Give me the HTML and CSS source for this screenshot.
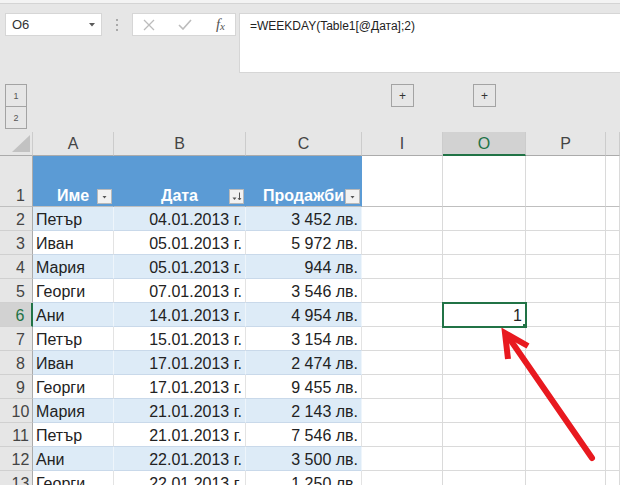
FILE: index.html
```html
<!DOCTYPE html>
<html lang="bg">
<head>
    <meta charset="UTF-8">
    <title>WEEKDAY</title>
    <link rel="stylesheet" href="styles.css">
</head>
<body>
    <div class="excel">
        <div class="ribbon-edge"></div>

        <!-- formula bar -->
        <div class="formula-bar">
            <div class="name-box">
                <span>O6</span>
                <svg width="6" height="4" viewBox="0 0 6 4"><path d="M0 0h6L3 3.5z" fill="#5a5a5a"/></svg>
            </div>
            <div class="grip"><i></i><i></i><i></i></div>
            <div class="fx-tools">
                <svg width="12" height="12" viewBox="0 0 12 12"><path d="M1 1l10 10M11 1L1 11" stroke="#bcbcbc" stroke-width="1.3" fill="none"/></svg>
                <svg width="14" height="11" viewBox="0 0 14 11"><path d="M1 6l4 4 8-9" stroke="#bcbcbc" stroke-width="1.6" fill="none"/></svg>
                <span class="fx">f<sub>x</sub></span>
            </div>
            <div class="formula">=WEEKDAY(Table1[@Дата];2)</div>
        </div>

        <!-- outline levels / group buttons -->
        <div class="outline">
            <div class="levels">
                <button class="lvl">1</button>
                <button class="lvl">2</button>
            </div>
            <button class="expand col-i">+</button>
            <button class="expand col-o">+</button>
        </div>

        <!-- sheet -->
        <div class="sheet">
            <div class="row heads">
                <div class="cell corner"></div>
                <div class="cell head">A</div>
                <div class="cell head">B</div>
                <div class="cell head">C</div>
                <div class="cell head">I</div>
                <div class="cell head current">O</div>
                <div class="cell head">P</div>
                <div class="cell head"></div>
            </div>

            <div class="row tall">
                <div class="cell rh">1</div>
                <div class="cell th">Име
                    <span class="filter"><svg width="13" height="13" viewBox="0 0 13 13"><path d="M4.5 6h4L6.5 8.5z" fill="#555"/></svg></span>
                </div>
                <div class="cell th">Дата
                    <span class="filter"><svg width="13" height="13" viewBox="0 0 13 13"><path d="M2.5 7.5h4l-2 2.5z" fill="#555"/><path d="M9.5 2.5v7M8 8l1.5 2 1.5-2" stroke="#555" stroke-width="1" fill="none"/></svg></span>
                </div>
                <div class="cell th">Продажби
                    <span class="filter"><svg width="13" height="13" viewBox="0 0 13 13"><path d="M4.5 6h4L6.5 8.5z" fill="#555"/></svg></span>
                </div>
                <div class="cell"></div>
                <div class="cell"></div>
                <div class="cell"></div>
                <div class="cell"></div>
            </div>

            <div class="row band">
                <div class="cell rh">2</div>
                <div class="cell td">Петър</div>
                <div class="cell td num">04.01.2013 г.</div>
                <div class="cell td num">3 452 лв.</div>
                <div class="cell"></div><div class="cell"></div><div class="cell"></div><div class="cell"></div>
            </div>
            <div class="row">
                <div class="cell rh">3</div>
                <div class="cell td">Иван</div>
                <div class="cell td num">05.01.2013 г.</div>
                <div class="cell td num">5 972 лв.</div>
                <div class="cell"></div><div class="cell"></div><div class="cell"></div><div class="cell"></div>
            </div>
            <div class="row band">
                <div class="cell rh">4</div>
                <div class="cell td">Мария</div>
                <div class="cell td num">05.01.2013 г.</div>
                <div class="cell td num">944 лв.</div>
                <div class="cell"></div><div class="cell"></div><div class="cell"></div><div class="cell"></div>
            </div>
            <div class="row">
                <div class="cell rh">5</div>
                <div class="cell td">Георги</div>
                <div class="cell td num">07.01.2013 г.</div>
                <div class="cell td num">3 546 лв.</div>
                <div class="cell"></div><div class="cell"></div><div class="cell"></div><div class="cell"></div>
            </div>
            <div class="row band">
                <div class="cell rh current">6</div>
                <div class="cell td">Ани</div>
                <div class="cell td num">14.01.2013 г.</div>
                <div class="cell td num">4 954 лв.</div>
                <div class="cell"></div>
                <div class="cell num active">1</div>
                <div class="cell"></div><div class="cell"></div>
            </div>
            <div class="row">
                <div class="cell rh">7</div>
                <div class="cell td">Петър</div>
                <div class="cell td num">15.01.2013 г.</div>
                <div class="cell td num">3 154 лв.</div>
                <div class="cell"></div><div class="cell"></div><div class="cell"></div><div class="cell"></div>
            </div>
            <div class="row band">
                <div class="cell rh">8</div>
                <div class="cell td">Иван</div>
                <div class="cell td num">17.01.2013 г.</div>
                <div class="cell td num">2 474 лв.</div>
                <div class="cell"></div><div class="cell"></div><div class="cell"></div><div class="cell"></div>
            </div>
            <div class="row">
                <div class="cell rh">9</div>
                <div class="cell td">Георги</div>
                <div class="cell td num">17.01.2013 г.</div>
                <div class="cell td num">9 455 лв.</div>
                <div class="cell"></div><div class="cell"></div><div class="cell"></div><div class="cell"></div>
            </div>
            <div class="row band">
                <div class="cell rh">10</div>
                <div class="cell td">Мария</div>
                <div class="cell td num">21.01.2013 г.</div>
                <div class="cell td num">2 143 лв.</div>
                <div class="cell"></div><div class="cell"></div><div class="cell"></div><div class="cell"></div>
            </div>
            <div class="row">
                <div class="cell rh">11</div>
                <div class="cell td">Петър</div>
                <div class="cell td num">21.01.2013 г.</div>
                <div class="cell td num">7 546 лв.</div>
                <div class="cell"></div><div class="cell"></div><div class="cell"></div><div class="cell"></div>
            </div>
            <div class="row band">
                <div class="cell rh">12</div>
                <div class="cell td">Ани</div>
                <div class="cell td num">22.01.2013 г.</div>
                <div class="cell td num">3 500 лв.</div>
                <div class="cell"></div><div class="cell"></div><div class="cell"></div><div class="cell"></div>
            </div>
            <div class="row">
                <div class="cell rh">13</div>
                <div class="cell td">Георги</div>
                <div class="cell td num">22.01.2013 г.</div>
                <div class="cell td num">1 250 лв.</div>
                <div class="cell"></div><div class="cell"></div><div class="cell"></div><div class="cell"></div>
            </div>
        </div>

        <!-- red annotation arrow -->
        <svg class="arrow" width="620" height="485" viewBox="0 0 620 485">
            <path d="M592 458L509 338" stroke="#e8191f" stroke-width="6" stroke-linecap="round" fill="none"/>
            <path d="M508 359L505 333L528 346" stroke="#e8191f" stroke-width="6" stroke-linejoin="miter" fill="none"/>
        </svg>
    </div>
</body>
</html>
```

FILE: styles.css
```css
:root {
    --cols: 33px 81px 132px 116px 81px 83px 80px 14px;
    --green: #217346;
}

body {
    margin: 0;
    background-color: #e6e6e6;
    font-family: 'Liberation Sans', Arial, sans-serif;
}

.excel {
    position: relative;
    width: 620px;
    height: 485px;
    overflow: hidden;
    background-color: #e6e6e6;
}

.ribbon-edge {
    height: 3px;
    background-color: #f3f3f3;
    border-bottom: 1px solid #d4d4d4;
}

/* formula bar */
.formula-bar {
    display: flex;
    align-items: flex-start;
    height: 60px;
    padding: 9px 0 0 5px;
}

.name-box {
    box-sizing: border-box;
    width: 97px;
    height: 23px;
    display: flex;
    align-items: center;
    justify-content: space-between;
    padding: 0 6px 0 6px;
    background-color: #fff;
    border: 1px solid #d6d6d6;
    font-size: 13px;
    color: #333;
}

.grip {
    width: 30px;
    height: 23px;
    display: flex;
    flex-direction: column;
    align-items: center;
    justify-content: center;
    gap: 3px;
}

.grip i {
    width: 2px;
    height: 2px;
    background-color: #a9a9a9;
}

.fx-tools {
    box-sizing: border-box;
    width: 104px;
    height: 23px;
    display: flex;
    align-items: center;
    justify-content: space-between;
    padding: 0 10px 0 10px;
    margin-right: 3px;
    background-color: #fff;
    border: 1px solid #d6d6d6;
}

.fx {
    font-family: 'Liberation Serif', serif;
    font-style: italic;
    font-size: 15px;
    color: #555;
    line-height: 1;
}

.fx sub {
    font-size: 11px;
    vertical-align: -1px;
}

.formula {
    box-sizing: border-box;
    flex: 1;
    height: 60px;
    padding: 3px 10px;
    background-color: #fff;
    border: 1px solid #d6d6d6;
    border-right: none;
    font-size: 12px;
    line-height: 18px;
    color: #222;
}

/* outline */
.outline {
    display: grid;
    grid-template-columns: var(--cols);
    grid-template-rows: 23px 22px;
    margin-top: 11px;
}

.levels {
    grid-column: 1;
    grid-row: 1 / 3;
    display: flex;
    flex-direction: column;
    margin-left: 5px;
    width: 22px;
}

.lvl,
.expand {
    box-sizing: border-box;
    padding: 0;
    background: transparent;
    border: 1px solid #a3a3a3;
    font-family: 'Liberation Sans', Arial, sans-serif;
    color: #555;
    cursor: pointer;
}

.lvl {
    height: 23px;
    font-size: 9px;
}

.lvl + .lvl {
    height: 22px;
    border-top: none;
}

.expand {
    grid-row: 1;
    justify-self: center;
    width: 23px;
    height: 23px;
    font-size: 12px;
    color: #333;
}

.expand.col-i { grid-column: 5; }
.expand.col-o { grid-column: 6; }

/* sheet grid */
.sheet {
    margin-top: 3px;
}

.row {
    display: grid;
    grid-template-columns: var(--cols);
    height: 24px;
}

.row.tall {
    height: 51px;
}

.cell {
    box-sizing: border-box;
    display: flex;
    align-items: flex-end;
    padding: 0 3px;
    background-color: #fff;
    border-right: 1px solid #dadada;
    border-bottom: 1px solid #dadada;
    font-size: 16px;
    line-height: 20px;
    color: #222;
    white-space: nowrap;
    overflow: hidden;
}

.num {
    justify-content: flex-end;
}

.heads .cell {
    align-items: center;
    justify-content: center;
    background-color: #e6e6e6;
    border-right-color: #cccccc;
    border-bottom-color: #ababab;
    line-height: 23px;
    color: #444;
}

.heads .current {
    background-color: #d2d2d2;
    border-bottom: 2px solid var(--green);
    color: var(--green);
}

.corner {
    align-items: flex-end !important;
    justify-content: flex-end !important;
    padding: 0 2px 3px 0;
}

.corner::before {
    content: '';
    width: 18px;
    height: 17px;
    background-color: #c2c2c2;
    clip-path: polygon(100% 0, 100% 100%, 0 100%);
}

.rh {
    justify-content: center;
    padding-left: 12px;
    background-color: #e6e6e6;
    border-right-color: #ababab;
    border-bottom-color: #d0d0d0;
    font-size: 16px;
    color: #444;
}

.rh.current {
    background-color: #d2d2d2;
    border-right: 2px solid var(--green);
    color: var(--green);
}

.tall .cell {
    border-bottom-color: #bfbfbf;
}

/* table */
.th {
    position: relative;
    justify-content: center;
    background-color: #5b9bd5;
    border-right-color: #5b9bd5;
    font-weight: bold;
    color: #fff;
}

.filter {
    position: absolute;
    right: 1px;
    bottom: 2px;
    box-sizing: border-box;
    width: 15px;
    height: 15px;
    display: flex;
    align-items: center;
    justify-content: center;
    background-color: #f2f2f2;
    border: 1px solid #b9b9b9;
}

.td {
    border-right-color: #e3e3e3;
    border-bottom-color: #c9d9ea;
}

.band .td {
    background-color: #ddebf7;
    border-right-color: #eef5fb;
}

/* selected cell */
.active {
    position: relative;
    z-index: 1;
    outline: 2px solid var(--green);
    outline-offset: -1px;
}

.active::after {
    content: '';
    position: absolute;
    right: -4px;
    bottom: -4px;
    width: 5px;
    height: 5px;
    background-color: var(--green);
    border: 1px solid #fff;
}

.arrow {
    position: absolute;
    top: 0;
    left: 0;
    z-index: 2;
    pointer-events: none;
}
```
